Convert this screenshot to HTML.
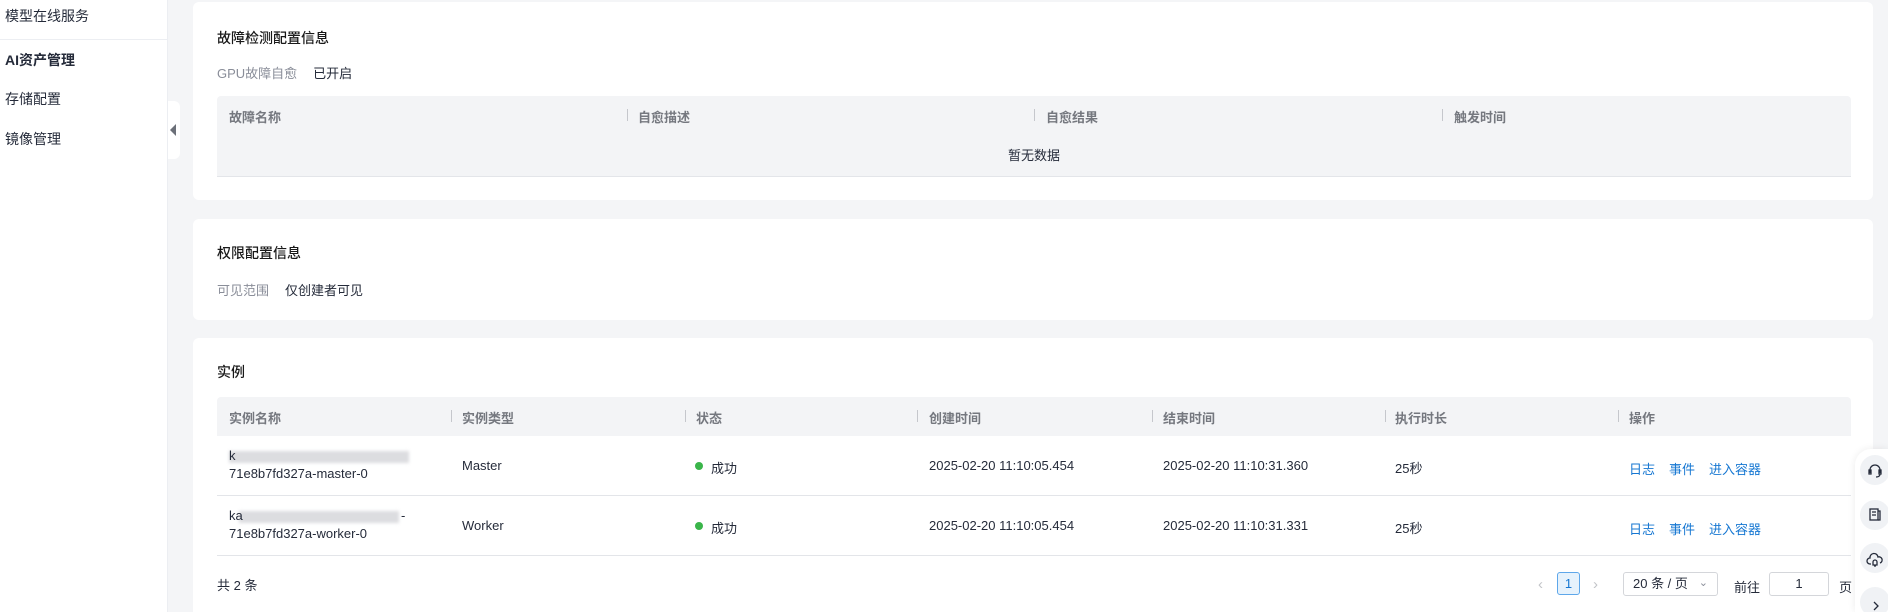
<!DOCTYPE html>
<html style="width:1888px;height:612px;overflow:hidden"><head><meta charset="utf-8"><style>
*{box-sizing:border-box;margin:0;padding:0}
body{width:1888px;height:612px;overflow:hidden;background:#f4f5f7;font-family:"Liberation Sans","Noto Sans CJK SC",sans-serif;font-size:13px;color:#252b3a;position:relative}
.abs{position:absolute}
.side{left:0;top:0;width:168px;height:612px;background:#fff;border-right:1px solid #eceef2}
.side div{position:absolute;left:5px;font-size:14px;color:#252b3a}
.card{position:absolute;left:193px;width:1680px;background:#fff;border-radius:6px;overflow:hidden}
.title{position:absolute;left:24px;font-size:14px;font-weight:500;color:#191919}
.lab{color:#8a8e99}
.th{position:absolute;background:#f3f4f6;height:39px;left:24px;width:1634px;border-radius:4px 4px 0 0}
.th span{position:absolute;top:11px;color:#75787f;font-weight:bold;font-size:13px}
.sep{position:absolute;top:13px;width:1px;height:12px;background:#c5c7cc}
.cell{position:absolute;font-size:13px;color:#252b3a}
.link{color:#1677d2}
.hr{position:absolute;left:24px;width:1634px;height:1px;background:#e3e5e9}
.circ{position:absolute;left:1860px;width:30px;height:30px;border-radius:50%;background:#f0f2f5}
</style></head><body>
<div class="abs side">
<div style="top:6px">模型在线服务</div>
<div style="top:39px;left:0;width:168px;height:1px;background:#eceef2"></div>
<div style="top:50px;font-weight:bold">AI资产管理</div>
<div style="top:89px">存储配置</div>
<div style="top:129px">镜像管理</div>
</div>
<div class="abs" style="left:168px;top:101px;width:12px;height:58px;background:#fff;border-radius:0 6px 6px 0"></div>
<div class="abs" style="left:170px;top:124px;width:0;height:0;border-top:6px solid transparent;border-bottom:6px solid transparent;border-right:6px solid #6b6f78"></div>

<div class="card" style="top:2px;height:198px">
<div class="title" style="top:26px">故障检测配置信息</div>
<div class="abs" style="left:24px;top:61px"><span class="lab">GPU故障自愈</span><span style="margin-left:16px">已开启</span></div>
<div class="th" style="top:94px;height:40px">
<span style="left:12px">故障名称</span>
<div class="sep" style="left:410px"></div><span style="left:421px">自愈描述</span>
<div class="sep" style="left:817px"></div><span style="left:829px">自愈结果</span>
<div class="sep" style="left:1225px"></div><span style="left:1237px">触发时间</span>
</div>
<div class="abs" style="left:24px;top:134px;width:1634px;height:41px;background:#f3f4f6;border-bottom:1px solid #e3e5e9;text-align:center;line-height:40px;color:#252b3a">暂无数据</div>
</div>

<div class="card" style="top:219px;height:101px">
<div class="title" style="top:24px">权限配置信息</div>
<div class="abs" style="left:24px;top:61px"><span class="lab">可见范围</span><span style="margin-left:16px">仅创建者可见</span></div>
</div>

<div class="card" style="top:338px;height:274px;border-radius:6px 6px 0 0">
<div class="title" style="top:24px">实例</div>
<div class="th" style="top:59px">
<span style="left:12px">实例名称</span>
<div class="sep" style="left:234px"></div><span style="left:245px">实例类型</span>
<div class="sep" style="left:468px"></div><span style="left:479px">状态</span>
<div class="sep" style="left:700px"></div><span style="left:712px">创建时间</span>
<div class="sep" style="left:935px"></div><span style="left:946px">结束时间</span>
<div class="sep" style="left:1168px"></div><span style="left:1178px">执行时长</span>
<div class="sep" style="left:1401px"></div><span style="left:1412px">操作</span>
</div>
<div class="abs" style="left:36px;top:113px;width:180px;height:12px;background:#dcdde0;filter:blur(1.5px)"></div>
<div class="cell" style="left:36px;top:110px">k</div>
<div class="cell" style="left:36px;top:128px">71e8b7fd327a-master-0</div>
<div class="cell" style="left:269px;top:120px">Master</div>
<div class="abs" style="left:502px;top:124px;width:8px;height:8px;border-radius:50%;background:#3ab54a"></div>
<div class="cell" style="left:518px;top:120px">成功</div>
<div class="cell" style="left:736px;top:120px">2025-02-20 11:10:05.454</div>
<div class="cell" style="left:970px;top:120px">2025-02-20 11:10:31.360</div>
<div class="cell" style="left:1202px;top:120px">25秒</div>
<div class="cell link" style="left:1436px;top:121px">日志</div>
<div class="cell link" style="left:1476px;top:121px">事件</div>
<div class="cell link" style="left:1516px;top:121px">进入容器</div>
<div class="hr" style="top:157px"></div>
<div class="abs" style="left:46px;top:173px;width:160px;height:12px;background:#dcdde0;filter:blur(1.5px)"></div>
<div class="cell" style="left:36px;top:170px">ka</div>
<div class="cell" style="left:208px;top:170px">-</div>
<div class="cell" style="left:36px;top:188px">71e8b7fd327a-worker-0</div>
<div class="cell" style="left:269px;top:180px">Worker</div>
<div class="abs" style="left:502px;top:184px;width:8px;height:8px;border-radius:50%;background:#3ab54a"></div>
<div class="cell" style="left:518px;top:180px">成功</div>
<div class="cell" style="left:736px;top:180px">2025-02-20 11:10:05.454</div>
<div class="cell" style="left:970px;top:180px">2025-02-20 11:10:31.331</div>
<div class="cell" style="left:1202px;top:180px">25秒</div>
<div class="cell link" style="left:1436px;top:181px">日志</div>
<div class="cell link" style="left:1476px;top:181px">事件</div>
<div class="cell link" style="left:1516px;top:181px">进入容器</div>
<div class="hr" style="top:217px"></div>
<div class="cell" style="left:24px;top:237px">共 2 条</div>
<div class="cell" style="left:1345px;top:238px;color:#c2c4c8;font-size:15px">&#8249;</div>
<div class="abs" style="left:1364px;top:234px;width:23px;height:23px;border:1px solid #5ea7ea;background:#e6f2fc;border-radius:3px;color:#1677d2;text-align:center;line-height:21px">1</div>
<div class="cell" style="left:1400px;top:238px;color:#c2c4c8;font-size:15px">&#8250;</div>
<div class="abs" style="left:1430px;top:234px;width:95px;height:24px;border:1px solid #d4d6da;border-radius:3px;padding-left:9px;line-height:22px">20 条 / 页<span style="position:absolute;right:9px;top:-1px;color:#8a8e99;font-size:11px">&#8964;</span></div>
<div class="cell" style="left:1541px;top:239px">前往</div>
<div class="abs" style="left:1576px;top:234px;width:60px;height:24px;border:1px solid #d4d6da;border-radius:3px;text-align:center;line-height:22px">1</div>
<div class="cell" style="left:1646px;top:239px">页</div>
</div>

<div class="abs" style="left:1855px;top:449px;width:33px;height:163px;background:#fff;border-radius:16px 0 0 0;box-shadow:0 0 8px rgba(0,0,0,.08)"></div>
<div class="circ" style="top:455px"></div>
<div class="circ" style="top:500px"></div>
<div class="circ" style="top:543px"></div>
<div class="circ" style="top:587px"></div>
<svg class="abs" style="left:1862px;top:455px" width="26" height="157" fill="none" stroke="#252b3a" stroke-width="1.3">
<path d="M8 18v-3a5 5 0 0 1 10 0v3M7 15h2v4H7zM17 15h2v4h-2zM18 19q0 3-4 3"/>
<rect x="8" y="54" width="8" height="11"/><path d="M16 56h2v9h-2M10 57h4M10 60h4"/>
<path d="M9 109h-1a3 3 0 0 1 0-6 4 4 0 0 1 8-1 3 3 0 0 1 2 6M11 110v-3a2 2 0 0 1 4 0v3zM12 111h2"/>
<path d="M12 147l4 4-4 4"/>
</svg>
</body></html>
